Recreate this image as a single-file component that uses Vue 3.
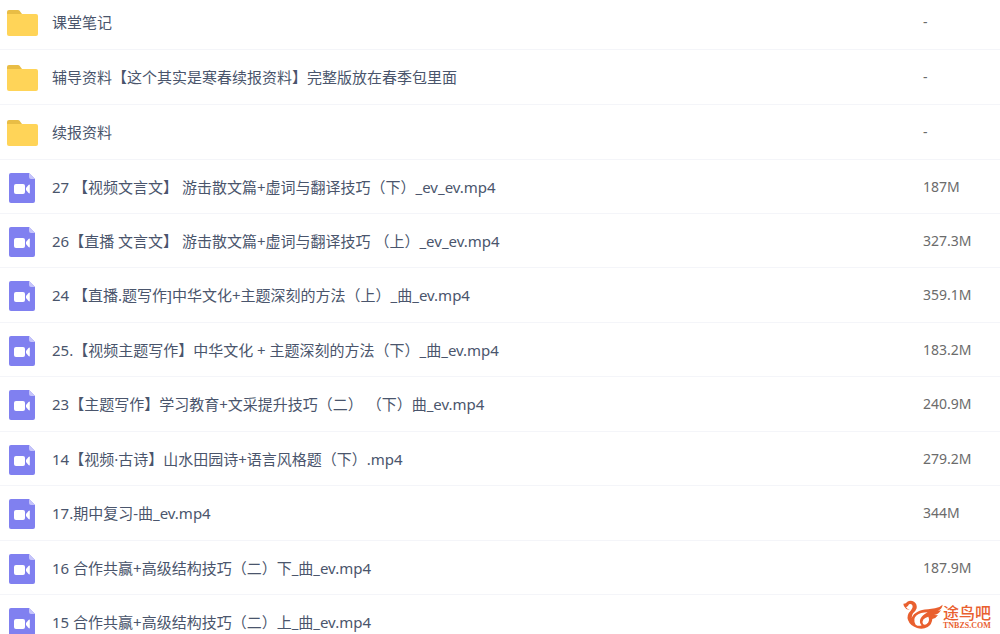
<script setup>
const files = [
  { name: '课堂笔记', size: '-', folder: true },
  { name: '辅导资料【这个其实是寒春续报资料】完整版放在春季包里面', size: '-', folder: true },
  { name: '续报资料', size: '-', folder: true },
  { name: '27 【视频文言文】 游击散文篇+虚词与翻译技巧（下）_ev_ev.mp4', size: '187M' },
  { name: '26【直播 文言文】 游击散文篇+虚词与翻译技巧 （上）_ev_ev.mp4', size: '327.3M' },
  { name: '24 【直播.题写作]中华文化+主题深刻的方法（上）_曲_ev.mp4', size: '359.1M' },
  { name: '25.【视频主题写作】中华文化 + 主题深刻的方法（下）_曲_ev.mp4', size: '183.2M' },
  { name: '23【主题写作】学习教育+文采提升技巧（二） （下）曲_ev.mp4', size: '240.9M' },
  { name: '14【视频·古诗】山水田园诗+语言风格题（下）.mp4', size: '279.2M' },
  { name: '17.期中复习-曲_ev.mp4', size: '344M' },
  { name: '16 合作共赢+高级结构技巧（二）下_曲_ev.mp4', size: '187.9M' },
  { name: '15 合作共赢+高级结构技巧（二）上_曲_ev.mp4', size: '' },
]
</script>

<template>
  <main class="page">
    <table class="files">
      <tbody>
        <tr v-for="file in files" :key="file.name">
          <td class="icon">
            <svg v-if="file.folder" width="32" height="26" viewBox="0 0 32 26" aria-hidden="true">
              <path d="M3 0h9q1 0 1.600.700L16 4v4H1V2Q1 0 3 0z" fill="#e9bd45" />
              <path d="M1 4h29q2 0 2 2v18q0 2-2 2H3q-2 0-2-2z" fill="#ffd458" />
            </svg>
            <svg v-else width="26" height="30" viewBox="0 0 26 30" aria-hidden="true">
              <path d="M2 0h18l6 6v22q0 2-2 2H2q-2 0-2-2V2Q0 0 2 0z" fill="#8080f0" />
              <path d="M20 0l6 6h-4q-2 0-2-2z" fill="#c5c4fb" />
              <rect x="5" y="11" width="11" height="10" rx="2" fill="#fff" />
              <path d="M17 15l2.500-3q1.300-1 1.300.300v7.400q0 1.300-1.300.300L17 17z" fill="#fff" />
            </svg>
          </td>
          <td class="name">{{ file.name }}</td>
          <td class="size">{{ file.size }}</td>
        </tr>
      </tbody>
    </table>

    <div class="brand">
      <svg width="40" height="31" viewBox="34 35 120 93" aria-hidden="true">
        <path d="M35 49Q42 50 47 43Q57 37 67 43Q77 50 75 63Q73 70 64 78Q60 84 60 92Q65 79 78 73Q89 67 109 66L130 63Q145 60 153 52Q151 65 139 70L148 69Q141 81 127 83L139 84Q132 94 122 95Q121 111 108 119Q94 127 76 122Q55 115 49 98Q44 82 57 70Q65 61 62 54Q58 48 52 51Q50 57 43 60Q48 67 54 67Q44 69 39 59Q36 56 35 49Z" fill="#e9602f" />
        <path d="M72 112Q62 95 75 84Q86 75 108 75Q92 83 86 95Q82 106 90 114Q81 118 72 112Z" fill="#fff" />
        <path d="M94 110Q88 94 110 88Q116 101 105 110Q99 114 94 110Z" fill="#fff" />
      </svg>
      <div class="brand-text">
        <span class="brand-name">途鸟吧</span>
        <span class="brand-url">TNBZS.COM</span>
      </div>
    </div>
  </main>
</template>

<style>
body {
  margin: 0;
  background: #fff;
}
</style>

<style scoped>
.page {
  position: relative;
  height: 100vh;
  overflow: hidden;
  font-family: "Noto Sans", "Noto Sans CJK SC", sans-serif;
  font-size: 15px;
  line-height: 20px;
}

.files {
  width: 100%;
  margin-top: -5px;
  border-collapse: separate;
  border-spacing: 0;
}

td {
  box-sizing: border-box;
  height: 54px;
  padding: 0;
  border-bottom: 1px solid #f4f5f9;
  vertical-align: middle;
}

tr:nth-child(-n + 3) td,
tr:nth-child(2n + 6) td {
  height: 55px;
}

.icon {
  width: 44px;
}

td.icon {
  padding-top: 2px;
}

.icon svg {
  display: block;
  margin: 0 auto;
}

.name {
  padding-left: 8px;
  color: #4a556c;
  white-space: nowrap;
  text-spacing-trim: space-all;
}

.size {
  width: 77px;
  color: #6b6b6b;
  font-size: 14px;
}

.brand {
  position: absolute;
  right: 9px;
  bottom: 4px;
  display: flex;
  align-items: flex-end;
}

.brand-text {
  display: flex;
  flex-direction: column;
  color: #e9602f;
}

.brand-name {
  font-size: 16px;
  line-height: 18px;
  font-weight: 500;
}

.brand-url {
  font-family: "Liberation Serif", serif;
  font-size: 8px;
  line-height: 8px;
  font-weight: 700;
}
</style>
